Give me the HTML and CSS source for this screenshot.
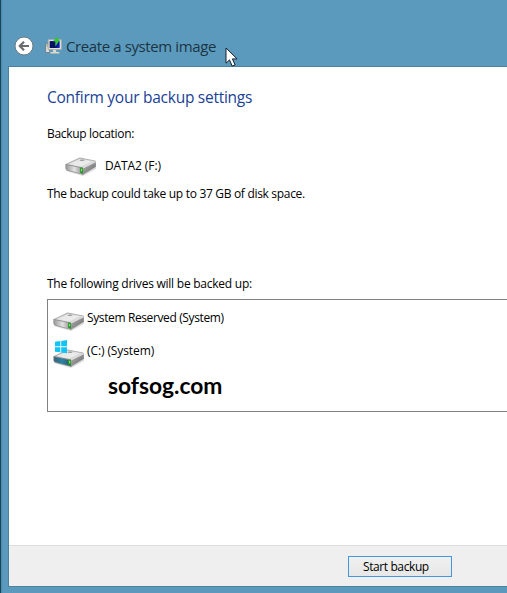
FILE: index.html
```
<!DOCTYPE html>
<html lang="en">
<head>
<meta charset="utf-8">
<title>Create a system image</title>
<link rel="stylesheet" href="styles.css">
</head>
<body>
<svg class="defs" width="0" height="0" aria-hidden="true">
  <defs>
    <linearGradient id="top" x1="0" y1="0" x2="1" y2="1"><stop offset="0" stop-color="#b9b9b9"/><stop offset=".55" stop-color="#e4e4e4"/><stop offset="1" stop-color="#c2c2c2"/></linearGradient>
    <linearGradient id="front" x1="0" y1="0" x2="1" y2="0"><stop offset="0" stop-color="#999"/><stop offset=".5" stop-color="#e2e2e2"/><stop offset="1" stop-color="#888"/></linearGradient>
    <linearGradient id="side" x1="0" y1="0" x2="1" y2="1"><stop offset="0" stop-color="#b5b5b5"/><stop offset="1" stop-color="#666"/></linearGradient>
    <linearGradient id="blue" x1="0" y1="0" x2="1" y2="0"><stop offset="0" stop-color="#376578"/><stop offset=".5" stop-color="#2b84a4"/><stop offset="1" stop-color="#35505c"/></linearGradient>
    <g id="drive">
      <path d="M1 12 17 18 31 9v3L18 19 1 14z" fill="#bbb" opacity=".5"/>
      <path d="M.8 7.5 14 1.2q1-.5 2 0L30.2 4q1 .3 0 1L18 11.2z" fill="url(#top)" stroke="#969696" stroke-width=".7"/>
      <path d="M4 7 15 2l11 2.5-9 4.7z" fill="#eee" opacity=".75"/>
      <ellipse cx="17" cy="3.2" rx="2.5" ry=".8" fill="#999"/>
      <path class="face" d="M.8 7.5 18 11v6.5L3 13.5Q1 13 .8 11.5z" stroke="#888" stroke-width=".7"/>
      <path d="m18 11 12.9-6.4v5.2L18 17.7z" fill="url(#side)"/>
      <path d="m18 11 12.7-6.2" stroke="#f8f8f8" stroke-width=".8"/>
      <path d="M15.2 10.6 18 11v5.6l-2.8-.6z" fill="#27962b"/><path d="M16 11.8h1.2v2.4H16z" fill="#76ed54"/>
    </g>
  </defs>
</svg>
<div class="window">
  <header class="titlebar">
    <svg class="back" viewBox="0 0 20 20"><circle cx="10" cy="10" r="9" fill="#fff" stroke="#6b7a82" stroke-width="1"/><path d="M15 10H6m4-4.2L5.8 10l4.2 4.2" fill="none" stroke="#6b6b6b" stroke-width="2.2"/></svg>
    <svg class="app" viewBox="0 0 16 16"><path d="M.5 6.5h4v8h-4z" fill="#ddd" stroke="#74858c"/><path d="M1.5 8.5h2" stroke="#6b9a45"/><path d="M3 2.5h12.4v9.3H3z" fill="#e9e6d7" stroke="#a5aaa4" stroke-width=".8"/><path d="M4.5 4h9.3v6.3H4.5z" fill="#0818b0"/><path d="M4.5 4H9l2 6.3H4.5z" fill="#071063"/><path d="M7.5 12h3v2h3v1.5H5V14h2.5z" fill="#dad8ce"/><path d="M9.7 9V4H7.5L11 0l3.5 4h-2.2v1.5z" fill="#38c532"/></svg>
    <h1 class="title">Create a system image</h1>
  </header>
  <main class="panel">
    <section class="content">
      <h2 class="heading">Confirm your backup settings</h2>
      <p class="label"><span class="t-loc">Backup location:</span></p>
      <div class="location"><svg class="disk" viewBox="0 0 32 19"><use href="#drive"/></svg><span class="t-data">DATA2 (F:)</span></div>
      <p class="size"><span class="t-size">The backup could take up to 37 GB of disk space.</span></p>
      <p class="list-label"><span class="t-list">The following drives will be backed up:</span></p>
      <div class="drives">
        <div class="drive"><svg class="disk" viewBox="0 0 32 19"><use href="#drive"/></svg><span class="t-res">System Reserved (System)</span></div>
        <div class="drive system"><svg class="disk os" viewBox="0 -9 32 28"><g class="osface"><use href="#drive"/></g><path d="M2-7.2 7.3-8v5.3H2zM8.2-8.1 14-9v6.3H8.2zM2-1.8h5.3v5.1L2 2.7zm6.2 0H14v6l-5.8-.8z" fill="#12c3f4"/></svg><span class="t-c">(C:) (System)</span></div>
        <div class="watermark">sofsog.com</div>
      </div>
    </section>
    <footer class="footer"><button class="start"><span>Start backup</span></button></footer>
  </main>
</div>
<svg class="cursor" viewBox="0 0 13 20"><path d="M1 1v15.2l3.5-3.3 2.7 6.2 2.9-1.2-2.7-6h4.7z" fill="#fff" stroke="#17202a" stroke-width="1"/></svg>
</body>
</html>
```
FILE: styles.css
```
* { box-sizing: border-box; }
body { margin: 0; width: 507px; height: 593px; overflow: hidden; font: 12px/16px "Open Sans", "Noto Sans", sans-serif; color: #000; }
h1, h2, p { margin: 0; font-weight: 400; }
.defs { position: absolute; }
.window { height: 593px; padding: 0 0 6px 8px; background: linear-gradient(90deg, #16455a 0, #16455a 1px, #4a88a9 1px, #5b9abd 3px); display: flex; flex-direction: column; }
.titlebar { height: 66px; display: flex; align-items: center; padding: 25px 0 0 6px; flex: none; white-space: nowrap; }
.back { width: 20px; height: 20px; }
.app { width: 17px; height: 17px; margin: 0 4px 1px 11px; }
.title { font-size: 15px; line-height: 20px; color: #1b3443; letter-spacing: -.39px; }
.panel { flex: 1; border: 1px solid #4d829e; border-right: 0; background: #fff; display: flex; flex-direction: column; }
.content { flex: 1; padding: 19px 0 0 38px; white-space: nowrap; }
.heading { font-size: 15.5px; line-height: 22px; color: #1a3f96; letter-spacing: -.26px; }
.label { margin-top: 18px; }
.location { display: flex; align-items: center; height: 20px; margin: 14px 0 10px 18px; }
.location .disk { margin-right: 8px; }
.disk { width: 32px; height: 19px; flex: none; }
.t-loc { letter-spacing: -.31px; }
.t-data { letter-spacing: -.1px; }
.t-size { letter-spacing: -.31px; }
.t-list { letter-spacing: -.24px; }
.t-res { letter-spacing: -.38px; }
.t-c { letter-spacing: -.1px; }
.face { fill: var(--face, url(#front)); }
.osface { --face: url(#blue); }
.list-label { margin-top: 74px; }
.drives { height: 113px; margin-top: 7px; border: 1px solid #828282; border-right: 0; padding: 10px 0 0 5px; }
.drive { display: flex; height: 33px; }
.drive span { margin-left: 2px; }
.drive .disk { margin-top: 2px; }
.drive .os { height: 28px; margin-top: -3px; }
.watermark { font: 700 22.8px/26px Lato, sans-serif; color: #000; margin: -4px 0 0 55px; }
.footer { height: 41px; flex: none; background: #efefef; border-top: 1px solid #dedede; padding: 10px 0 0 339px; }
.start { width: 104px; height: 21px; padding: 0 0 0 14px; border: 1px solid #4794df; background: linear-gradient(#f0f0f0, #e7e7e7); text-align: left; font: 12px/18px "Open Sans", sans-serif; letter-spacing: -.4px; color: #000; display: block; white-space: nowrap; }
.cursor { position: absolute; left: 225px; top: 47px; width: 13px; height: 20px; }
```
